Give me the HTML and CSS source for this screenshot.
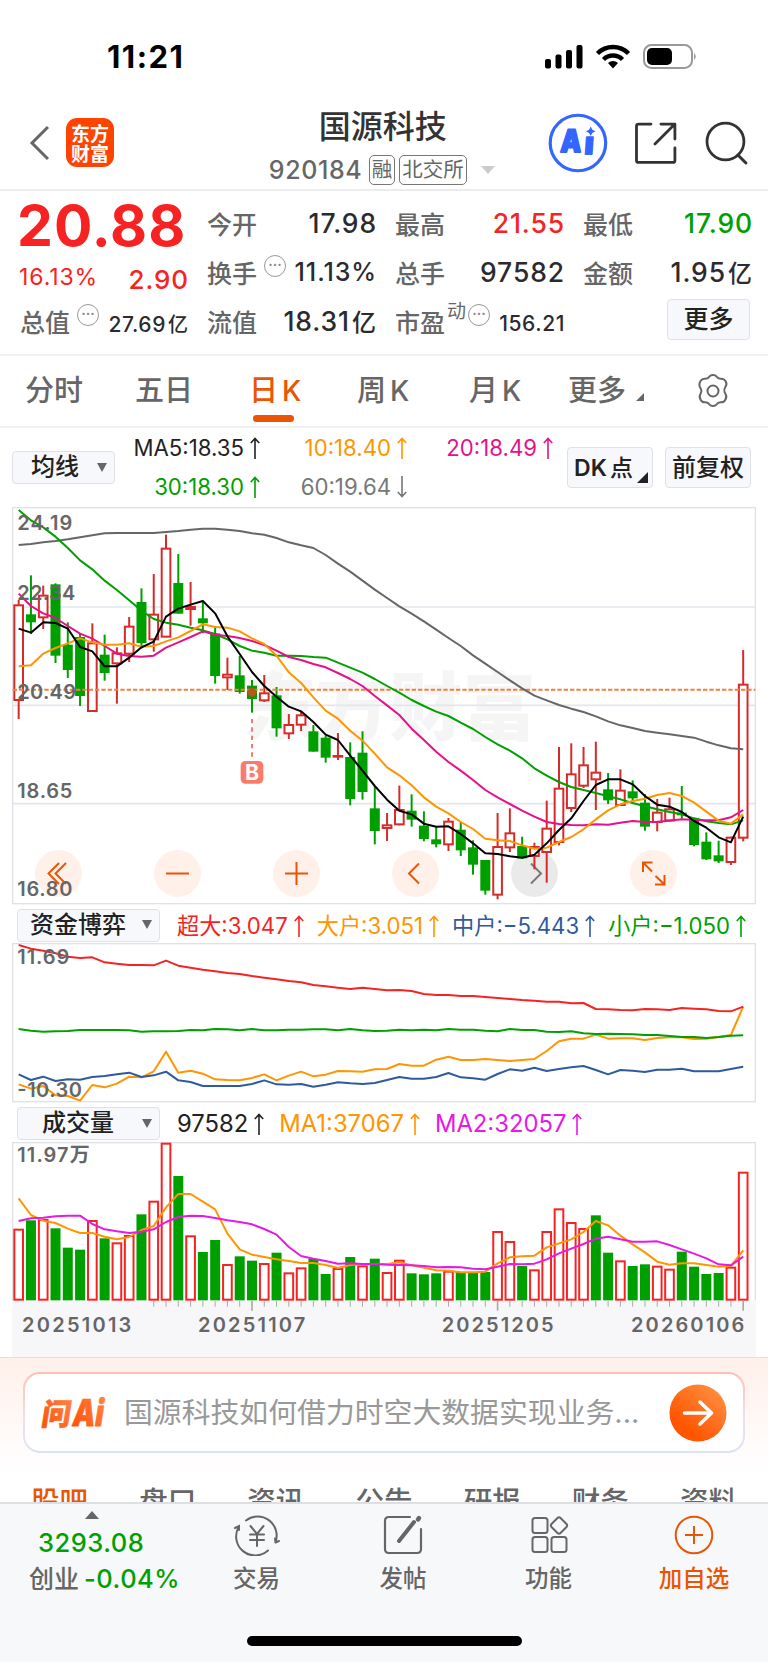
FILE: index.html
```html
<!DOCTYPE html>
<html lang="zh-CN">
  <head>
    <title>国源科技 920184</title>
    <meta charset="utf-8">
    <link rel="stylesheet" href="styles.css">
  </head>
  <body>

  <div class="status">
    <span class="clock">11:21</span>
    <svg class="signal" width="154" height="30" viewBox="0 0 154 30">
      <g fill="#000">
        <rect x="0" y="16" width="6" height="9.500" rx="2"/>
        <rect x="10.500" y="11.500" width="6" height="14" rx="2"/>
        <rect x="21" y="7" width="6" height="18.500" rx="2"/>
        <rect x="31.500" y="2" width="6" height="23.500" rx="2"/>
      </g>
      <g fill="none" stroke="#000" stroke-width="4.500">
        <path d="M52.500 10.500a22 22 0 0 1 31 0"/>
        <path d="M58.500 16.500a13.500 13.500 0 0 1 19 0"/>
      </g>
      <path d="M68 25.500l-5-5.500a7.500 7.500 0 0 1 10 0z" fill="#000"/>
      <rect x="99" y="2" width="48" height="23" rx="7.500" fill="none" stroke="#999" stroke-width="2"/>
      <rect x="102" y="5" width="25" height="17" rx="5" fill="#000"/>
      <path d="M149 10q3.500 3.500 0 7z" fill="#999"/>
    </svg>
  </div>

  <div class="header">
    <svg class="back" width="22" height="36" viewBox="0 0 22 36"><path d="M19 2L3 18l16 16" fill="none" stroke="#666" stroke-width="3"/></svg>
    <div class="logo">东方<br>财富</div>
    <div class="name">
      <h1>国源科技</h1>
      <div class="code"><span>920184</span><i>融</i><i>北交所</i><b class="down"></b></div>
    </div>
    <svg class="ai" width="60" height="60" viewBox="0 0 60 60">
      <circle cx="30" cy="30" r="27.800" fill="none" stroke="#3366ff" stroke-width="3.200"/>
      <g fill="#3366ff" stroke="#3366ff" stroke-width="1.800" stroke-linejoin="round" font-weight="900" font-size="31">
        <text x="12" y="39.500" textLength="21" lengthAdjust="spacingAndGlyphs" transform="skewX(-3) translate(2 0)">A</text>
        <text x="37" y="41" transform="skewX(-4) translate(2 0)">ı</text>
      </g>
      <path d="M42.800 13.500l1.600 3.200 3.200 1.600-3.200 1.600-1.600 3.200-1.600-3.200-3.200-1.600 3.200-1.600z" fill="#3366ff"/>
    </svg>
    <svg class="share" width="42" height="42" viewBox="0 0 42 42">
      <path d="M16 2H3.500q-2 0-2 2v34.500q0 2 2 2H38q2 0 2-2V26M20 22L39 3M26 2h14v15" fill="none" stroke="#333" stroke-width="2.800" stroke-linecap="round" stroke-linejoin="round"/>
    </svg>
    <svg class="search" width="46" height="46" viewBox="0 0 46 46">
      <circle cx="21.500" cy="21.500" r="18.500" fill="none" stroke="#333" stroke-width="2.800"/>
      <path d="M34 35l8 8" stroke="#333" stroke-width="3" stroke-linecap="round"/>
    </svg>
  </div>

  <div class="quote">
    <div class="col first">
      <div class="price">20.88</div>
      <p class="chg"><span>16.13%</span><b>2.90</b></p>
      <p class="small"><label>总值</label><em>···</em><b>27.69<u>亿</u></b></p>
    </div>
    <div class="col">
      <p><label>今开</label><b>17.98</b></p>
      <p class="mid"><label>换手</label><em>···</em><b>11.13%</b></p>
      <p><label>流值</label><b>18.31<u>亿</u></b></p>
    </div>
    <div class="col">
      <p><label>最高</label><b class="red">21.55</b></p>
      <p><label>总手</label><b>97582</b></p>
      <p class="small"><label>市盈</label><sup>动</sup><em>···</em><b>156.21</b></p>
    </div>
    <div class="col">
      <p><label>最低</label><b class="green">17.90</b></p>
      <p><label>金额</label><b>1.95<u>亿</u></b></p>
      <p><button class="more">更多</button></p>
    </div>
  </div>

  <div class="tabs">
    <span>分时</span>
    <span>五日</span>
    <span class="active">日<small>K</small></span>
    <span>周<small>K</small></span>
    <span>月<small>K</small></span>
    <span class="corner">更多</span>
    <svg width="36" height="36" viewBox="0 0 36 36" fill="none" stroke="#666" stroke-width="2">
      <path d="M14.500 3.500q1-1.500 3.500-1.500t3.500 1.500q1.500 2.500 4.500 2.200 3-.2 4.500 2.300 2 3-.2 6-1.600 2.500-.8 5 .3.500.8 1.500 2 3 .2 6-1.500 3-4.500 2.800-3-.3-4.500 2.200-1 1.500-3.500 1.500t-3.500-1.500q-1.500-2.500-4.500-2.200-3 .2-4.500-2.800-1.800-3 .2-6 1.500-2.500 0-5-2.500-3.500-.2-7.500 1.500-2.500 4.500-2.300 3 .3 4.500-2.200z"/>
      <circle cx="18" cy="18" r="5.500"/>
    </svg>
  </div>

  <div class="averages">
    <button class="pick">均线</button>
    <div class="ma">
      <span class="black">MA5:18.35<svg width="10" height="22"><use href="#up"/></svg></span>
      <span class="orange">10:18.40<svg width="10" height="22"><use href="#up"/></svg></span>
      <span class="pink">20:18.49<svg width="10" height="22"><use href="#up"/></svg></span>
      <span class="green">30:18.30<svg width="10" height="22"><use href="#up"/></svg></span>
      <span class="gray">60:19.64<svg width="10" height="22"><use href="#dn"/></svg></span>
    </div>
    <button class="opt dk">DK<u>点</u></button>
    <button class="opt">前复权</button>
  </div>

  <div class="kchart">
    <div class="tools">
      <button><svg viewBox="0 0 47 47"><path d="M24 13L13.500 23.500 24 34M31 13L20.500 23.500 31 34"/></svg></button>
      <button><svg viewBox="0 0 47 47"><path d="M12 23.500h23"/></svg></button>
      <button><svg viewBox="0 0 47 47"><path d="M12 23.500h23M23.500 12v23"/></svg></button>
      <button><svg viewBox="0 0 47 47"><path d="M27 13.500L17 23.500l10 10"/></svg></button>
      <button class="off"><svg viewBox="0 0 47 47"><path d="M20 13.500L30 23.500l-10 10"/></svg></button>
      <button><svg viewBox="0 0 47 47"><path d="M22 21.500l-9-9M13 22V12.500h9.500M25.500 26l9 8.500M34.500 25v9.500H25"/></svg></button>
    </div>
    <svg id="kline" width="744" height="398" viewBox="36 21 2232 1194"></svg>
  </div>

  <div class="legend flows">
    <button class="pick">资金博弈</button>
    <span class="red">超大:3.047<svg width="10" height="22"><use href="#up"/></svg></span>
    <span class="orange">大户:3.051<svg width="10" height="22"><use href="#up"/></svg></span>
    <span class="blue">中户:−5.443<svg width="10" height="22"><use href="#up"/></svg></span>
    <span class="green">小户:−1.050<svg width="10" height="22"><use href="#up"/></svg></span>
  </div>
  <svg id="flow" class="plot" width="744" height="160" viewBox="36 129 2232 480"></svg>

  <div class="legend vol">
    <button class="pick">成交量</button>
    <span class="black">97582<svg width="10" height="22"><use href="#up"/></svg></span>
    <span class="orange">MA1:37067<svg width="10" height="22"><use href="#up"/></svg></span>
    <span class="violet">MA2:32057<svg width="10" height="22"><use href="#up"/></svg></span>
  </div>
  <svg id="volume" class="plot" width="744" height="215" viewBox="36 96 2232 645"></svg>

  <div class="ask">
    <div class="card">
      <svg class="wen" width="68" height="34" viewBox="0 0 68 34">
        <defs>
          <linearGradient id="fire" x1="0" y1="1" x2="1" y2="0">
            <stop offset="0" stop-color="#ff4a00"/><stop offset="1" stop-color="#ff8a4a"/>
          </linearGradient>
        </defs>
        <g fill="url(#fire)" stroke="url(#fire)" stroke-width=".8" font-weight="900" transform="skewX(-9)">
          <text x="5" y="28.500" font-size="30" textLength="29" lengthAdjust="spacingAndGlyphs">问</text>
          <text x="36" y="30" font-size="37" textLength="31" lengthAdjust="spacingAndGlyphs">Ai</text>
        </g>
      </svg>
      <span>国源科技如何借力时空大数据实现业务...</span>
      <svg class="go" width="58" height="58" viewBox="0 0 58 58">
        <defs>
          <linearGradient id="sun" x1=".3" y1=".8" x2=".9" y2=".1">
            <stop offset="0" stop-color="#ff5500"/><stop offset="1" stop-color="#ff8f40"/>
          </linearGradient>
        </defs>
        <circle cx="29" cy="29" r="28.500" fill="url(#sun)"/>
        <path d="M15.500 29h27M31 18l11.500 11L31 40" fill="none" stroke="#fff" stroke-width="3.500" stroke-linecap="round" stroke-linejoin="round"/>
      </svg>
    </div>
  </div>

  <div class="news">
    <span class="active">股吧</span><span>盘口</span><span>资讯</span><span>公告</span><span>研报</span><span>财务</span><span>资料</span>
  </div>

  <div class="bottom">
    <div class="index">
      <i></i>
      <b>3293.08</b>
      <p>创业<b>-0.04%</b></p>
    </div>
    <a>
      <svg width="46" height="42" viewBox="0 0 46 42" fill="none" stroke="#666" stroke-width="2" stroke-linecap="round">
        <path d="M12 6.500A19 19 0 0 1 41.500 28M34 36.500A19 19 0 0 1 5 12.500M1 14l4-2 0 4M41.500 28.500l3.500-1.500M41.500 28.500l-.5-4"/>
        <path d="M16.500 12l6.500 8 6.500-8M16 20.500h14M16 26h14M23 20.500V32"/>
      </svg>
      交易
    </a>
    <a>
      <svg width="40" height="42" viewBox="0 0 40 42" fill="none" stroke="#666" stroke-width="2.200" stroke-linecap="round">
        <path d="M27 3H6q-4 0-4 4v28q0 4 4 4h28q4 0 4-4V15"/>
        <path d="M16 27L31 8" stroke-width="4"/><path d="M35 5.500l1-1.500" stroke-width="4.500"/>
      </svg>
      发帖
    </a>
    <a>
      <svg width="40" height="42" viewBox="0 0 40 42" fill="none" stroke="#666" stroke-width="2">
        <rect x="3.500" y="4" width="15" height="15" rx="2.500"/>
        <rect x="3.500" y="23" width="15" height="15" rx="2.500"/>
        <rect x="22.500" y="23" width="15" height="15" rx="2.500"/>
        <path d="M28.500 4q1.500-1.500 3 0l6 6q1.300 1.500 0 3l-6 6q-1.500 1.500-3 0l-6-6q-1.300-1.500 0-3z"/>
      </svg>
      功能
    </a>
    <a class="add">
      <svg width="40" height="42" viewBox="0 0 40 42" fill="none" stroke="#ea5504" stroke-width="2">
        <circle cx="20" cy="21" r="18.300"/><path d="M11 21h18M20 12v18"/>
      </svg>
      加自选
    </a>
    <div class="home"></div>
  </div>

  <svg class="defs" width="0" height="0">
    <symbol id="up" viewBox="0 0 10 22"><path d="M5 22V1.500M.8 6L5 1.500 9.200 6" fill="none" stroke="currentColor" stroke-width="1.600"/></symbol>
    <symbol id="dn" viewBox="0 0 10 22"><path d="M5 0v20.500M.8 16L5 20.500 9.200 16" fill="none" stroke="currentColor" stroke-width="1.600"/></symbol>
  </svg>

  <script type="text/javascript" src="charts.js"></script>

  </body>
</html>
```

FILE: styles.css
```css
* {
  box-sizing: border-box;
}
body {
  margin: 0;
  width: 768px;
  height: 1663px;
  overflow: hidden;
  background: #fff;
  color: #2b2b2f;
  font-family: Inter, "Noto Sans CJK SC", sans-serif;
  display: flex;
  flex-direction: column;
}
body > * {
  flex: none;
}
h1, p {
  margin: 0;
}
b, label, i, em {
  font-style: normal;
  font-weight: 500;
}
u {
  text-decoration: none;
}
button {
  font: inherit;
  font-weight: 500;
  color: #222;
  padding: 0;
  border: 1px solid #dfe1e6;
  border-radius: 4px;
  background: #f7f8fb;
}
.defs { display: none; }

.red { color: #f72323; }
.green { color: #00a000; }
.orange { color: #ff9500; }
.pink { color: #e6118a; }
.blue { color: #2f5a9f; }
.gray { color: #777; }
.violet { color: #e619e6; }
.black { color: #222; }

/* status bar */
.status {
  height: 96px;
  padding: 38px 69px 0 107px;
  display: flex;
  justify-content: space-between;
}
.clock {
  font-size: 31px;
  line-height: 38px;
  font-weight: 700;
  letter-spacing: 1.500px;
  color: #000;
}
.signal {
  margin-top: 5px;
}

/* title bar */
.header {
  height: 95px;
  border-bottom: 2px solid #ececee;
  display: flex;
  align-items: center;
  padding: 0 18px 0 29px;
}
.logo {
  width: 48px;
  height: 49px;
  margin-left: 15px;
  padding-top: 5px;
  border-radius: 11px;
  background: #ff4400;
  color: #fff;
  text-align: center;
  font: 700 19px/19.500px "Noto Sans CJK SC", sans-serif;
}
.name {
  width: 256px;
  margin-left: 155px;
  height: 93px;
}
.name h1 {
  font-size: 32px;
  line-height: 44px;
  font-weight: 500;
  margin: 9px 0 0 50px;
  color: #333;
}
.code {
  display: flex;
  align-items: center;
  height: 30px;
  margin-top: 6px;
  color: #666;
}
.code span {
  font-size: 25px;
  font-weight: 500;
  letter-spacing: .6px;
  width: 100px;
}
.code i {
  border: 1.5px solid #777;
  border-radius: 5px;
  height: 30px;
  line-height: 28px;
  font-size: 20.500px;
  font-weight: 400;
  padding: 0 2px;
  margin-right: 4px;
}
.down {
  border: 7px solid transparent;
  border-top: 8px solid #ccc;
  border-bottom: 0;
  margin-left: 10px;
}
.ai { margin-left: 24px; }
.share { margin-left: 27px; }
.search { margin-left: 27px; }

/* quote */
.quote {
  height: 165px;
  border-bottom: 2px solid #f1f1f3;
  display: grid;
  grid-template-columns: 167px 168px 168px 168px;
  column-gap: 20px;
  padding: 7px 16px 0 20px;
}
.col p {
  display: flex;
  align-items: center;
  height: 49px;
}
.col b {
  margin: 0 -2px 0 auto;
  font-size: 26.500px;
  letter-spacing: .9px;
  white-space: nowrap;
}
.col label {
  font-size: 25px;
  font-weight: 500;
  color: #666;
}
.col u {
  font-size: 24px;
  letter-spacing: 0;
  margin: 0 1px 0 2px;
}
.col em {
  width: 22px;
  height: 22px;
  margin: -12px 0 0 7px;
  border: 1.5px solid #999;
  border-radius: 50%;
  font-size: 15px;
  line-height: 17px;
  letter-spacing: 0;
  text-align: center;
  color: #888;
}
.col .small b {
  font-size: 21px;
  letter-spacing: .6px;
  padding-top: 5px;
}
.col .small u {
  font-size: 20px;
}
.col .mid b {
  font-size: 25px;
}
.col sup {
  font-size: 19px;
  line-height: 20px;
  margin-top: -18px;
  margin-left: 2px;
  color: #666;
}
.col sup + em {
  margin-left: 2px;
}
.first .price {
  font-size: 57px;
  line-height: 56px;
  height: 56px;
  margin-left: -3px;
  letter-spacing: 1px;
  font-weight: 700;
  color: #f72323;
}
.first .chg {
  color: #f72323;
  height: 42px;
  padding-top: 4px;
}
.first .chg span {
  margin-left: -1px;
  font-size: 23px;
  letter-spacing: .9px;
}
.first .chg b {
  font-size: 26px;
  padding-top: 5px;
}
.more {
  width: 83px;
  height: 41px;
  margin: 0 1px 3px auto;
  font-size: 25px;
  line-height: 36px;
}

/* period tabs */
.tabs {
  height: 72px;
  border-bottom: 2px solid #f1f1f3;
  display: grid;
  grid-template-columns: 110px 114px 108px 112px 99px 127px 40px;
  padding-left: 25px;
  align-items: center;
  font-size: 29px;
  line-height: 68px;
  font-weight: 500;
  color: #666;
}
.tabs small {
  font-size: 28px;
  margin-left: 4px;
}
.tabs .active {
  position: relative;
  color: #ea5504;
}
.tabs .active::after {
  content: "";
  position: absolute;
  left: 4px;
  bottom: 3px;
  width: 41px;
  height: 7px;
  border-radius: 4px;
  background: #ea5504;
}
.corner::after {
  content: "";
  display: inline-block;
  margin-left: 10px;
  border-left: 8px solid transparent;
  border-bottom: 8px solid #666;
}

/* averages */
.averages {
  height: 79px;
  padding: 0 17px 0 12px;
  display: flex;
  align-items: center;
}
.pick {
  flex: none;
  width: 103px;
  height: 33px;
  display: flex;
  align-items: center;
  justify-content: space-between;
  padding: 0 7px 1px 18px;
  font-size: 24px;
  line-height: 30px;
}
.pick::after {
  content: "";
  border: 5px solid transparent;
  border-top: 9px solid #666;
  border-bottom: 0;
}
.ma {
  width: 438px;
  margin-right: 14px;
  display: grid;
  grid-template-columns: 145px 147px 146px;
  text-align: right;
  font-size: 22.200px;
  line-height: 38px;
  height: 77px;
}
.ma svg, .legend svg {
  margin-left: 6px;
  vertical-align: -3px;
}
.opt {
  width: 86px;
  height: 41px;
  margin-right: 12px;
  font-size: 24px;
  line-height: 38px;
  white-space: nowrap;
}
.opt:last-child {
  margin-right: 0;
}
.dk {
  position: relative;
  font-weight: 600;
  font-size: 23px;
  padding-right: 13px;
}
.dk u {
  margin-left: 3px;
  font-weight: 500;
}
.dk::after {
  content: "";
  position: absolute;
  right: 4px;
  bottom: 4px;
  border-left: 11px solid transparent;
  border-bottom: 11px solid #222;
}

/* charts */
.kchart {
  position: relative;
  width: 744px;
  height: 398px;
  margin-left: 12px;
}
.kchart > svg, .plot {
  display: block;
}
.kchart > svg {
  position: relative;
}
.plot {
  margin-left: 12px;
}
.plot text, .kchart text {
  font-size: 60px;
  font-weight: 600;
  fill: #666;
}
.tools {
  position: absolute;
  left: 23px;
  top: 343px;
  display: flex;
  gap: 72px;
}
.tools button {
  width: 47px;
  height: 47px;
  border: 0;
  border-radius: 50%;
  background: rgba(255, 225, 208, .45);
}
.tools svg {
  display: block;
  fill: none;
  stroke: #ea5504;
  stroke-width: 2;
}
.tools .off {
  background: rgba(190, 190, 190, .32);
}
.tools .off svg {
  stroke: #777;
}

.legend {
  display: flex;
  align-items: center;
  padding: 2px 0 0 17px;
  font-size: 22.200px;
  line-height: 33px;
  white-space: nowrap;
}
.legend .pick {
  width: 143px;
  padding-left: 12px;
  margin-right: 17px;
}
.legend span {
  margin-right: 13px;
}
.flows {
  height: 38px;
}
.vol {
  height: 39px;
  font-size: 23.800px;
}
.vol .pick {
  padding-left: 24px;
}
.vol span {
  margin-right: 15px;
}

/* ask ai */
.ask {
  height: 113px;
  border-top: 1px solid #dcdfe4;
  padding: 14px 24px 0;
  background: linear-gradient(#fff0ea, #fff);
}
.card {
  height: 81px;
  margin: 0 -1px;
  border: 2px solid transparent;
  border-radius: 17px;
  background: linear-gradient(#fff, #fff) padding-box, linear-gradient(#ffc0b4, #ece2ee 60%, #dbe3f5) border-box;
  display: flex;
  align-items: center;
  padding: 0 16px 0 15px;
}
.wen {
  overflow: visible;
}
.card span {
  margin-left: 16px;
  font-size: 28.850px;
  line-height: 40px;
  color: #999;
  white-space: nowrap;
}
.go {
  margin-left: auto;
}

/* cut off by the bottom bar */
.news {
  height: 32px;
  overflow: hidden;
  display: flex;
  justify-content: space-between;
  padding: 12px 31px 0;
  font-size: 28.500px;
  line-height: 40px;
  font-weight: 500;
  color: #666;
}
.news .active {
  color: #ea5504;
}

/* bottom bar */
.bottom {
  position: relative;
  height: 160px;
  border-top: 2px solid #dedfe2;
  background: #f7f8fa;
  display: grid;
  grid-template-columns: 183px 147px 146px 145px 146px;
}
.bottom a {
  display: flex;
  flex-direction: column;
  align-items: center;
  padding-top: 10px;
  font-size: 23.500px;
  line-height: 46px;
  font-weight: 500;
  color: #666;
}
.bottom .add {
  color: #ea5504;
}
.index {
  display: flex;
  flex-direction: column;
  padding: 7px 0 0 29px;
  color: #666;
}
.index i {
  width: 0;
  margin-left: 56px;
  border: 7px solid transparent;
  border-bottom: 8px solid #666;
  border-top: 0;
}
.index b {
  color: #00a000;
  font-size: 25.500px;
  line-height: 36px;
  letter-spacing: .5px;
  margin: 6px 0 0 9px;
}
.index p {
  font-size: 25px;
  line-height: 36px;
  font-weight: 500;
  white-space: nowrap;
}
.index p b {
  margin: 0 0 0 5px;
}
.home {
  position: absolute;
  left: 247px;
  bottom: 16px;
  width: 275px;
  height: 10px;
  border-radius: 5px;
  background: #000;
}
```

FILE: charts.js
```js
// all values are in chart units, three to a pixel
var X0 = 56, STEP = 36.84;
var RED = '#d62b2b', GREEN = '#009f00';

// colour, high, body top, body bottom, low
var candles = [
  'r 300 316 600 657', 'g 226 343 367 402', 'r 257 287 352 387', 'g 250 253 467 489', 'g 367 434 510 534',
  'g 400 411 588 618', 'r 370 430 633 633', 'g 404 464 519 542', 'r 442 460 490 611', 'r 351 380 461 486',
  'g 265 306 429 446', 'r 222 344 418 455', 'r 104 146 410 410', 'g 162 249 341 341', 'r 246 321 327 377',
  'g 302 355 370 400', 'g 378 400 528 551', 'r 473 524 532 570', 'g 468 526 576 581', 'g 540 557 597 638',
  'r 525 580 601 606', 'g 561 586 685 710', 'r 642 675 700 717', 'r 636 646 674 693', 'g 675 694 755 755',
  'g 706 713 773 788', 'r 699 768 770 780', 'g 727 771 897 916', 'g 694 758 876 899', 'g 858 925 993 1033',
  'r 939 976 984 1023', 'r 857 930 973 976', 'g 883 932 959 980', 'g 934 977 1017 1024', 'g 980 1018 1033 1042',
  'r 954 965 1033 1053', 'g 965 989 1051 1068', 'g 1021 1042 1094 1124', 'g 1080 1080 1172 1184', 'r 939 1041 1184 1198',
  'r 925 1000 1042 1056', 'g 1010 1038 1075 1075', 'r 1028 1041 1068 1108', 'r 902 986 1056 1148', 'r 741 866 1026 1036',
  'r 730 823 924 936', 'r 741 796 857 864', 'r 725 818 838 930', 'g 819 868 901 912', 'r 808 872 915 915',
  'g 841 874 895 903', 'g 882 908 980 992', 'r 897 938 966 994', 'r 893 928 961 961', 'g 858 938 946 956',
  'g 955 955 1035 1039', 'g 997 1025 1078 1080', 'g 1022 1066 1084 1089', 'r 1010 1013 1086 1095', 'r 450 554 1013 1024'
];

var ma5 = [386,398,367,369,386,441,454,499,499,473,442,425,350,326,314,303,340,409,462,516,558,590,620,634,666,704,720,767,812,858,899,932,943,971,980,979,1002,1030,1060,1062,1069,1073,1064,1030,990,955,903,855,838,838,853,888,914,920,936,963,983,1012,1027,950];
var ma10 = [499,496,461,444,430,415,427,434,434,430,440,438,424,412,393,373,381,383,394,415,432,467,517,549,592,632,656,692,722,761,802,826,856,892,920,940,966,987,1016,1021,1023,1036,1046,1043,1026,1011,988,958,931,913,903,896,885,879,888,908,935,962,971,943];
var ma20 = [281,318,340,354,378,401,416,438,461,468,470,467,443,427,411,394,404,408,414,423,435,452,471,480,492,502,519,537,558,588,616,645,686,720,755,786,812,840,870,892,912,932,950,966,972,975,976,973,974,968,963,966,965,962,958,960,961,961,952,930];
var ma30 = [30,61,82,110,144,181,208,242,270,301,332,357,368,374,383,391,402,418,438,452,458,467,467,468,471,473,488,503,518,537,558,578,600,618,635,648,668,687,711,733,752,775,805,827,846,861,870,879,889,898,909,919,928,936,943,955,964,969,973,961];
var ma60 = [135,132,127,123,118,112,106,100,99,99,99,99,96,93,89,86,86,89,93,100,104,114,127,136,144,165,191,215,242,269,294,319,341,364,389,414,438,466,491,516,541,565,587,601,615,626,636,649,664,676,684,693,698,703,708,713,725,736,745,748];

var huge = [135,146,152,160,170,174,172,187,191,195,195,196,182,197,203,209,214,219,222,228,233,238,243,247,255,259,263,267,263,267,271,270,273,282,285,285,288,288,291,294,297,300,302,305,305,310,309,327,328,330,331,327,328,330,324,326,328,333,334,320];
var small = [387,392,395,394,393,390,390,390,390,391,395,394,394,393,390,391,387,388,391,387,391,391,389,389,388,388,391,387,391,393,392,389,391,389,391,387,389,389,392,394,387,390,390,395,396,394,400,402,401,402,403,405,405,408,411,411,414,411,407,406];
var large = [553,566,558,586,588,602,555,562,551,530,532,514,455,518,512,521,538,540,541,534,523,541,527,515,529,524,513,514,515,508,507,492,497,497,479,470,480,480,477,480,483,480,477,453,424,416,416,404,416,415,415,420,414,412,412,417,416,411,405,320];
var middle = [523,540,530,543,538,539,531,528,523,518,531,526,515,541,546,558,558,558,558,552,541,553,554,552,560,554,547,550,552,549,540,531,536,536,531,519,532,535,539,522,508,512,503,513,507,502,498,510,523,510,512,516,509,509,506,514,514,514,507,500];

var volTop = [358,331,329,355,413,419,332,385,399,377,313,274,100,198,378,426,390,464,439,452,461,428,489,474,447,492,476,441,468,446,488,451,490,493,490,484,486,487,486,365,395,468,480,365,297,338,356,316,428,453,468,463,469,478,425,470,492,489,472,187];
var volCol = 'rgrgggrgrrgrrgrggrggrgrrggrgrgrrgggrgggrrgrrrrrggrggrrggggrr';
var vma1 = [265,315,332,339,356,369,369,380,388,381,360,348,292,252,252,275,298,371,418,434,441,448,453,459,459,465,474,465,463,462,462,457,466,473,481,482,487,487,485,460,442,439,437,412,400,388,366,333,346,377,403,427,455,464,460,460,465,470,468,421];
var vma2 = [333,325,323,319,317,317,342,358,364,369,365,358,336,321,317,318,324,331,336,343,357,374,411,438,446,453,461,460,462,462,464,465,466,468,472,471,472,476,478,470,462,463,461,448,430,416,402,386,380,388,395,395,394,405,418,431,445,463,466,440];

function rect(x, y, w, h, attrs) {
  return '<rect x="' + x + '" y="' + y + '" width="' + w + '" height="' + h + '" ' + attrs + '/>';
}
function seg(x1, y1, x2, y2, color, w, more) {
  return '<path d="M' + x1 + ' ' + y1 + 'L' + x2 + ' ' + y2 + '" stroke="' + color + '" stroke-width="' + w + '" ' + (more || '') + '/>';
}
function curve(ys, color) {
  var pts = ys.map(function(y, i) { return (X0 + i * STEP).toFixed(1) + ',' + y; });
  return '<polyline points="' + pts.join(' ') + '" fill="none" stroke="' + color + '" stroke-width="6" stroke-linejoin="round"/>';
}
function label(x, y, w, text) {
  return '<text x="' + x + '" y="' + y + '" textLength="' + w + '">' + text + '</text>';
}
function frame(y, h) {
  return rect(38, y, 2228, h, 'fill="none" stroke="#dfe1e6" stroke-width="4"');
}

// k line
var s = '<text x="728" y="702" textLength="880" style="font-size:220px;font-weight:900;fill:#f5f5f6">东方财富</text>';
s += frame(23, 1188);
[321, 616, 911].forEach(function(y) { s += seg(38, y, 2266, y, '#e3e6ec', 5); });
candles.forEach(function(c, i) {
  var v = c.split(' '), x = X0 + i * STEP, hi = +v[1], top = +v[2], bot = +v[3], lo = +v[4];
  if (v[0] === 'g') {
    s += seg(x, hi, x, lo, GREEN, 6) + rect(x - 15, top, 30, bot - top, 'fill="' + GREEN + '"');
  } else {
    s += seg(x, hi, x, top, RED, 6) + seg(x, bot, x, lo, RED, 6);
    s += rect(x - 13, top, 26, bot - top, 'fill="#fff" stroke="' + RED + '" stroke-width="6"');
  }
});
s += seg(38, 569, 2266, 569, '#f0813c', 6, 'stroke-dasharray="13 6"');
s += curve(ma60, '#666') + curve(ma30, '#00a000') + curve(ma20, '#e6118a') + curve(ma10, '#ff9500') + curve(ma5, '#000');
s += '<circle cx="756" cy="577" r="13" fill="#b8561c"/>';
s += seg(756, 657, 756, 770, '#fb7b6b', 6, 'stroke-dasharray="13 12"');
s += rect(722, 783, 68, 68, 'rx="14" fill="#fb7b6b"');
s += '<text x="756" y="841" text-anchor="middle" style="fill:#fff;font-size:64px;font-weight:700">B</text>';
s += label(52, 91, 165, '24.19') + label(52, 299, 174, '22.34') + label(52, 597, 176, '20.49');
s += label(52, 893, 165, '18.65') + label(52, 1189, 165, '16.80');
document.getElementById('kline').innerHTML = s;

// money flow
s = frame(131, 474);
s += curve(large, '#ff9500') + curve(middle, '#2f5a9f') + curve(huge, '#f72323') + curve(small, '#00a000');
s += label(52, 192, 156, '11.69') + label(52, 592, 194, '-10.30');
document.getElementById('flow').innerHTML = s;

// volume, with the date axis under it
s = frame(98, 480) + rect(36, 571, 2232, 172, 'fill="#f7f7fa"');
volTop.forEach(function(top, i) {
  var x = X0 + i * STEP;
  if (volCol[i] === 'g') {
    s += rect(x - 15, top, 30, 571 - top, 'fill="' + GREEN + '"');
  } else {
    s += rect(x - 13, top + 1, 26, 568 - top, 'fill="#fff" stroke="#f72323" stroke-width="6"');
  }
  if (i > 10) {
    s += seg(x, 573, x, i % 20 === 19 ? 602 : 590, '#aaa', i % 20 === 19 ? 5 : 3);
  }
});
s += curve(vma1, '#ff9500') + curve(vma2, '#e619e6');
s += label(52, 156, 217, '11.97万');
s += label(66, 667, 328, '20251013') + label(594, 667, 322, '20251107') +
  label(1325, 667, 336, '20251205') + label(1893, 667, 340, '20260106');
document.getElementById('volume').innerHTML = s;
```
